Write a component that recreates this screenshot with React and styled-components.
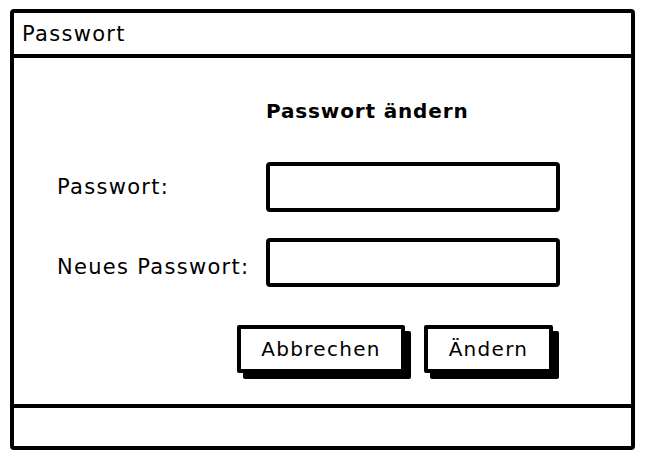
import React from "react";
import styled, { createGlobalStyle } from "styled-components";

const GlobalStyle = createGlobalStyle`
  html, body {
    margin: 0;
    padding: 0;
    background: #ffffff;
  }
  body {
    font-family: "DejaVu Sans", "Liberation Sans", sans-serif;
    color: #000;
  }
`;

const Page = styled.div`
  padding: 9px 0 0 10px;
  width: 650px;
  height: 462px;
  box-sizing: border-box;
`;

const Window = styled.div`
  width: 625px;
  height: 441px;
  box-sizing: border-box;
  border: 4px solid #000;
  border-radius: 4px;
  display: flex;
  flex-direction: column;
  background: #fff;
`;

const TitleBar = styled.div`
  height: 41px;
  border-bottom: 4px solid #000;
  display: flex;
  align-items: center;
  padding-left: 8px;
  font-size: 21px;
  letter-spacing: 1.3px;
`;

const Content = styled.div`
  flex: 1;
  display: grid;
  grid-template-columns: 209px 294px;
  grid-auto-rows: min-content;
  row-gap: 26px;
  align-items: center;
  padding: 41px 0 0 43px;
`;

const Heading = styled.div`
  grid-column: 2;
  font-size: 20px;
  line-height: 24px;
  font-weight: bold;
  letter-spacing: 0.85px;
  margin-bottom: 13px;
`;

const Label = styled.label`
  grid-column: 1;
  font-size: 21px;
  letter-spacing: 1.3px;
  line-height: 24px;
  margin-top: ${(p) => p.$shift || 0}px;
`;

const Field = styled.div`
  grid-column: 2;
  height: ${(p) => p.$h}px;
  box-sizing: border-box;
  border: 4px solid #000;
  border-radius: 4px;
  background: #fff;
`;

const Actions = styled.div`
  grid-column: 1 / -1;
  display: flex;
  justify-content: flex-end;
  gap: 19px;
  padding-right: 7px;
  margin-top: 12px;
`;

const Button = styled.button`
  flex-shrink: 0;
  width: ${(p) => p.$w}px;
  height: 48px;
  box-sizing: border-box;
  border: 4px solid #000;
  border-radius: 2px;
  background: #fff;
  box-shadow: 6px 6px 0 0 #000;
  font-family: "DejaVu Sans", "Liberation Sans", sans-serif;
  font-size: 20px;
  letter-spacing: 1.3px;
  color: #000;
  padding: 0;
  display: flex;
  align-items: center;
  justify-content: center;
`;

const StatusBar = styled.div`
  height: 38px;
  border-top: 4px solid #000;
`;

export default function App() {
  return (
    <>
      <GlobalStyle />
      <Page>
        <Window>
          <TitleBar>Passwort</TitleBar>
          <Content>
            <Heading>Passwort ändern</Heading>
            <Label>Passwort:</Label>
            <Field $h={50} />
            <Label $shift={8}>Neues Passwort:</Label>
            <Field $h={49} />
            <Actions>
              <Button $w={168}>Abbrechen</Button>
              <Button $w={129}>Ändern</Button>
            </Actions>
          </Content>
          <StatusBar />
        </Window>
      </Page>
    </>
  );
}
